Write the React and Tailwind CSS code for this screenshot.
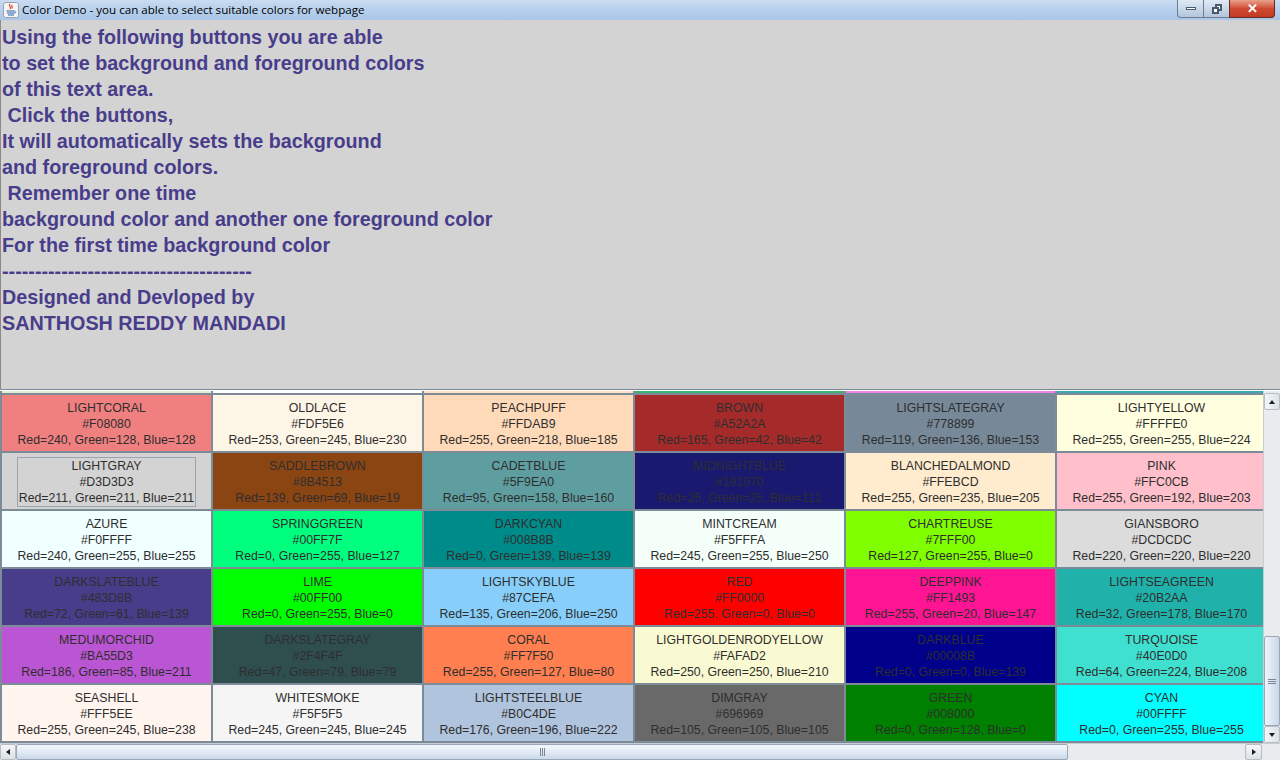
import React from 'react';

const lines = [
  'Using the following buttons you are able',
  'to set the background and foreground colors',
  'of this text area.',
  '\u00a0Click the buttons,',
  'It will automatically sets the background',
  'and foreground colors.',
  '\u00a0Remember one time',
  'background color and another one foreground color',
  'For the first time background color',
  '--------------------------------------',
  'Designed and Devloped by',
  'SANTHOSH REDDY MANDADI',
];

// row above is scrolled out of view, only a sliver shows
const sliver = ['#e4ecd4', '#ffffff', '#ffe4c4', '#3cb371', '#ee82ee', '#3aa8b4'];

const colors = [
  ['LIGHTCORAL', '#F08080', 240, 128, 128],
  ['OLDLACE', '#FDF5E6', 253, 245, 230],
  ['PEACHPUFF', '#FFDAB9', 255, 218, 185],
  ['BROWN', '#A52A2A', 165, 42, 42],
  ['LIGHTSLATEGRAY', '#778899', 119, 136, 153],
  ['LIGHTYELLOW', '#FFFFE0', 255, 255, 224],
  ['LIGHTGRAY', '#D3D3D3', 211, 211, 211],
  ['SADDLEBROWN', '#8B4513', 139, 69, 19],
  ['CADETBLUE', '#5F9EA0', 95, 158, 160],
  ['MIDNIGHTBLUE', '#191970', 25, 25, 112],
  ['BLANCHEDALMOND', '#FFEBCD', 255, 235, 205],
  ['PINK', '#FFC0CB', 255, 192, 203],
  ['AZURE', '#F0FFFF', 240, 255, 255],
  ['SPRINGGREEN', '#00FF7F', 0, 255, 127],
  ['DARKCYAN', '#008B8B', 0, 139, 139],
  ['MINTCREAM', '#F5FFFA', 245, 255, 250],
  ['CHARTREUSE', '#7FFF00', 127, 255, 0],
  ['GIANSBORO', '#DCDCDC', 220, 220, 220],
  ['DARKSLATEBLUE', '#483D8B', 72, 61, 139],
  ['LIME', '#00FF00', 0, 255, 0],
  ['LIGHTSKYBLUE', '#87CEFA', 135, 206, 250],
  ['RED', '#FF0000', 255, 0, 0],
  ['DEEPPINK', '#FF1493', 255, 20, 147],
  ['LIGHTSEAGREEN', '#20B2AA', 32, 178, 170],
  ['MEDUMORCHID', '#BA55D3', 186, 85, 211],
  ['DARKSLATEGRAY', '#2F4F4F', 47, 79, 79],
  ['CORAL', '#FF7F50', 255, 127, 80],
  ['LIGHTGOLDENRODYELLOW', '#FAFAD2', 250, 250, 210],
  ['DARKBLUE', '#00008B', 0, 0, 139],
  ['TURQUOISE', '#40E0D0', 64, 224, 208],
  ['SEASHELL', '#FFF5EE', 255, 245, 238],
  ['WHITESMOKE', '#F5F5F5', 245, 245, 245],
  ['LIGHTSTEELBLUE', '#B0C4DE', 176, 196, 222],
  ['DIMGRAY', '#696969', 105, 105, 105],
  ['GREEN', '#008000', 0, 128, 0],
  ['CYAN', '#00FFFF', 0, 255, 255],
];

const JavaIcon = () => (
  <svg width="16" height="16" viewBox="0 0 16 16">
    <rect x="0.5" y="0.5" width="15" height="15" rx="2" fill="#f4f4f4" stroke="#9aa3ad" />
    <path d="M7 2 C5 4 9 5 7 7 M9 3 C8 4.5 10 5 9 6.5" stroke="#e0401c" strokeWidth="1.2" fill="none" />
    <path d="M3.5 9 h8 M4 11 h7 M5 13 h6" stroke="#2860b0" strokeWidth="1.2" />
    <path d="M11.5 9 q2 0.5 0 2.5" stroke="#2860b0" strokeWidth="1" fill="none" />
  </svg>
);

const TitleBar = () => (
  <div className="h-[20px] flex items-center bg-gradient-to-b from-[#c9dcf1] via-[#b7d0ec] to-[#a9c5e6] relative">
    <div className="pl-[3px] pr-[3px] flex items-center"><JavaIcon /></div>
    <span className="text-[11.6px] text-black leading-none" style={{ fontFamily: '"Open Sans", "Noto Sans", sans-serif' }}>
      Color Demo - you can able to select suitable colors for webpage
    </span>
    <div className="absolute right-[5px] top-0 flex h-[18px]">
      <div className="w-[26px] h-full rounded-bl-[4px] border border-[#6d7c90] border-t-0 border-r-0 bg-gradient-to-b from-[#dfe9f5] to-[#b3c6de] flex items-center justify-center">
        <div className="w-[10px] h-[3px] bg-white border border-[#4a5a6e]" />
      </div>
      <div className="w-[26px] h-full border-b border-l border-[#6d7c90] bg-gradient-to-b from-[#dfe9f5] to-[#b3c6de] flex items-center justify-center">
        <div className="relative w-[10px] h-[10px]">
          <div className="absolute right-0 top-0 w-[7px] h-[7px] border-2 border-[#4a5a6e] bg-white" />
          <div className="absolute left-0 bottom-0 w-[7px] h-[7px] border-2 border-[#4a5a6e] bg-white" />
        </div>
      </div>
      <div className="w-[46px] h-full rounded-br-[4px] border border-t-0 border-[#6d2a20] bg-gradient-to-b from-[#e8a08c] via-[#cf4a30] to-[#c23a22] flex items-center justify-center">
        <span className="text-white font-bold text-[13px] leading-none" style={{ fontFamily: '"Liberation Sans", sans-serif' }}>✕</span>
      </div>
    </div>
  </div>
);

const Arrow = ({ dir }) => {
  const paths = {
    up: 'M1 5 L4 1 L7 5 Z',
    down: 'M1 1 L4 5 L7 1 Z',
    left: 'M5 1 L1 4 L5 7 Z',
    right: 'M1 1 L5 4 L1 7 Z',
  };
  const w = dir === 'up' || dir === 'down' ? 8 : 6;
  const h = dir === 'up' || dir === 'down' ? 6 : 8;
  return (
    <svg width={w} height={h} viewBox={`0 0 ${w} ${h}`}>
      <path d={paths[dir]} fill="#1e1e1e" />
    </svg>
  );
};

const ColorButton = ({ c, focused }) => {
  const [name, hex, r, g, b] = c;
  return (
    <div className="h-[56px] flex items-center justify-center pt-[2px]" style={{ backgroundColor: hex }}>
      <div className={`flex flex-col items-center text-[12.3px] leading-[16px] text-[#2e2e2e] px-[1px] ${focused ? 'border border-[#9aa4ae]' : 'border border-transparent'}`}>
        <span>{name}</span>
        <span>{hex}</span>
        <span>Red={r}, Green={g}, Blue={b}</span>
      </div>
    </div>
  );
};

export default function App() {
  return (
    <div className="w-[1280px] h-[760px] overflow-hidden bg-[#d3d3d3] flex flex-col" style={{ fontFamily: '"Liberation Sans", Arial, sans-serif' }}>
      <TitleBar />
      <div className="h-[369px] border-l border-[#8a8a8a] pl-[1px] pt-[4px] bg-[#d3d3d3]">
        {lines.map((l, i) => (
          <div key={i} className="text-[19.75px] leading-[26px] font-bold text-[#483D8B] whitespace-pre">{l}</div>
        ))}
      </div>
      <div className="h-[2px] bg-[#7b8a99] border-b border-white" />
      <div className="flex-1 flex flex-col min-h-0">
        <div className="flex flex-1 min-h-0">
          <div className="flex-1 overflow-hidden bg-[#7d8b99] min-w-0">
            <div className="-mt-[54px] grid grid-cols-[repeat(6,209px)] gap-[2px] pl-[2px]">
              {sliver.map((s, i) => (
                <div key={'s' + i} className="h-[56px]" style={{ backgroundColor: s }} />
              ))}
              {colors.map((c, i) => (
                <ColorButton key={c[0]} c={c} focused={i === 6} />
              ))}
            </div>
          </div>
          <div className="w-[17px] bg-[#e9ebee] border-l border-[#c8cdd3] flex flex-col">
            <div className="h-[17px] mt-[2px] flex items-center justify-center bg-gradient-to-r from-[#f4f6f8] to-[#dde2e8] border border-[#b4bcc6] rounded-[2px]">
              <Arrow dir="up" />
            </div>
            <div className="flex-1 flex flex-col justify-end">
              <div className="h-[90px] rounded-[2px] border border-[#9aa7b6] bg-gradient-to-r from-[#eef3f9] via-[#dde7f3] to-[#c8d6e8] flex flex-col items-center justify-center gap-[1px]">
                <div className="w-[8px] h-[1px] bg-[#7a8696]" />
                <div className="w-[8px] h-[1px] bg-[#7a8696]" />
                <div className="w-[8px] h-[1px] bg-[#7a8696]" />
              </div>
            </div>
            <div className="h-[17px] flex items-center justify-center bg-gradient-to-r from-[#f4f6f8] to-[#dde2e8] border border-[#b4bcc6] rounded-[2px]">
              <Arrow dir="down" />
            </div>
          </div>
        </div>
        <div className="h-[17px] flex bg-[#e9ebee] border-t border-[#c8cdd3]">
          <div className="w-[16px] flex items-center justify-center bg-gradient-to-b from-[#f4f6f8] to-[#dde2e8] border border-[#b4bcc6] rounded-[2px]">
            <Arrow dir="left" />
          </div>
          <div className="flex-1 flex">
            <div className="w-[1052px] rounded-[2px] border border-[#9aa7b6] bg-gradient-to-b from-[#f4f8fc] via-[#e2eaf5] to-[#cbd8ea] flex items-center justify-center gap-[1px]">
              <div className="w-[1px] h-[8px] bg-[#7a8696]" />
              <div className="w-[1px] h-[8px] bg-[#7a8696]" />
              <div className="w-[1px] h-[8px] bg-[#7a8696]" />
            </div>
          </div>
          <div className="w-[17px] flex items-center justify-center bg-gradient-to-b from-[#f4f6f8] to-[#dde2e8] border border-[#b4bcc6] rounded-[2px]">
            <Arrow dir="right" />
          </div>
          <div className="w-[18px] bg-[#e9ebee]" />
        </div>
      </div>
    </div>
  );
}
